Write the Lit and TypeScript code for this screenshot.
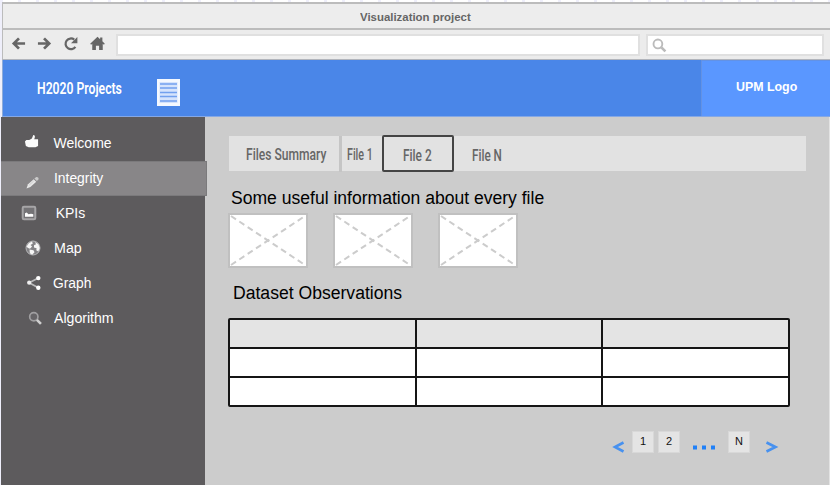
import { LitElement, html, svg, css } from "lit";
import { customElement, property, query, state } from "lit/decorators.js";

/** One line of text scaled horizontally to an exact width. */
@customElement("fit-text")
class FitText extends LitElement {
  @property() text = "";
  @property({ type: Number }) width = 0;
  @state() scale = 1;
  @query("span") span!: HTMLSpanElement;
  static styles = css`
    :host { display: block; height: 20px; white-space: nowrap; }
    span { display: inline-block; line-height: 20px; transform-origin: 0 50%; }
  `;
  firstUpdated() {
    this.scale = this.width / this.span.offsetWidth;
  }
  render() {
    return html`<div style="width:${this.width}px"><span style="transform:scaleX(${this.scale})">${this.text}</span></div>`;
  }
}

const icons = {
  back: svg`<path d="M15 8H3M8.500 2.500L3 8l5.500 5.500" fill="none" stroke="currentColor" stroke-width="2.900"/>`,
  forward: svg`<path d="M1 8h12M7.500 2.500L13 8l-5.500 5.500" fill="none" stroke="currentColor" stroke-width="2.900"/>`,
  reload: svg`<path d="M13.200 11.500A5.700 5.700 0 1 1 12 3.900" fill="none" stroke="currentColor" stroke-width="2.400"/><path d="M15.300 1v6.800H8.500z" fill="currentColor"/>`,
  home: svg`<path d="M8 .8L10.800 3.400V1.500h2.400v4.200L15.800 8.200l-1 1.100L13.600 8.300V14.800H9.700V10.300H6.300v4.500H2.400V8.300L1.200 9.300l-1-1.100z" fill="currentColor"/>`,
  search: svg`<circle cx="6.300" cy="6.300" r="4.700" fill="none" stroke="currentColor" stroke-width="2"/><path d="M10 10l4.300 4.300" stroke="currentColor" stroke-width="2.800"/>`,
  thumb: svg`<path d="M1 8L2.500 6.400H5.600L8.400 4.900 9.900 1c1.600.2 2 1.400 1.600 2.600L10.900 5.600H15V12.900L12.200 14H5L2 12.800z" fill="#fbfbfb"/>`,
  pencil: svg`<path d="M1.600 14.500l1.600-4.600 6-5.400 2.800 2.700-6.300 5.600z" fill="#e6e6e6"/><path d="M10 3.800l2-1.600c1.700-.2 2.500.8 2.500 2.200L12.700 6.500z" fill="#c9c9c9"/><path d="M4.500 10.800l4.700-4.300" stroke="#ccc"/>`,
  picture: svg`<rect x="1.700" y="1.700" width="12.600" height="12.600" rx="1.300" fill="#747376" stroke="#a6a5a7" stroke-width="2"/><path d="M4 11.800V8.200l1.700-.8 1.800 1.800L10 8.800l2.300.4v2.600z" fill="#fff"/>`,
  globe: svg`<circle cx="8" cy="8" r="7" fill="#848386" stroke="#b5b5b7"/><path d="M1.500 6.500L4 3l3-1.600.8 2L5.500 5l1.600 1.600L5 8.800 3 8zM4.500 9.500l4 .7 1 2-2.300 2.600-2.400-1.500zM10 2l3.400 2.200L14.800 8l-1.500 3.600-2-1.300.3-2L9 7.500 9 5.300l2-1z" fill="#f6f6f6"/>`,
  share: svg`<path d="M12.300 3.100L3.200 7.700l9.100 5.100" fill="none" stroke="#bcbcbd" stroke-width="1.700"/><circle cx="12.300" cy="3.100" r="2.200" fill="#fff"/><circle cx="3.200" cy="7.700" r="2.100" fill="#eee"/><circle cx="12.300" cy="12.800" r="2.200" fill="#fff"/>`,
  lens: svg`<circle cx="6.200" cy="6.200" r="4.400" fill="#666467" stroke="#a09fa1" stroke-width="1.800"/><path d="M9.500 9.500l4.300 4.300" stroke="#d0d0d0" stroke-width="2.800"/>`,
};

const menu = [
  { label: "Welcome", icon: icons.thumb, size: 15, ix: 24, iy: -2.5, tx: 53.5, w: 58 },
  { label: "Integrity", icon: icons.pencil, size: 15, ix: 25, iy: 3.5, tx: 54.3, w: 49.5, active: true },
  { label: "KPIs", icon: icons.picture, size: 16, ix: 21, iy: -0.5, tx: 55.7, w: 30 },
  { label: "Map", icon: icons.globe, size: 16, ix: 25, iy: -1, tx: 54.3, w: 27.5 },
  { label: "Graph", icon: icons.share, size: 16, ix: 25.5, iy: -1, tx: 53, w: 38.5 },
  { label: "Algorithm", icon: icons.lens, size: 15, ix: 28, iy: 0, tx: 53.5, w: 59.5 },
];

@customElement("app-root")
class AppRoot extends LitElement {
  static styles = css`
    :host {
      display: flex; flex-direction: column; box-sizing: border-box;
      width: 830px; height: 485px; overflow: hidden; padding: 2px 0 0 2px;
      font-family: "Liberation Sans", Arial, sans-serif;
      background: repeating-linear-gradient(90deg, #efeffb 0 3px, #fff 3px 18px);
    }
    * { box-sizing: border-box; }
    svg { display: block; overflow: visible; flex: none; }
    .title {
      height: 28px; flex: none; display: flex; justify-content: center; padding-top: 5px;
      background: #ededed; border: 2px solid #bcbcbc; border-right: 0; border-left-width: 1px;
      color: #666; font-size: 11px; font-weight: bold;
    }
    .title fit-text { margin: -2px 2px 0 0; }
    .tools {
      height: 30px; flex: none; display: flex; align-items: center; padding: 0 6px 0 8px;
      background: #ececec; border-left: 1px solid #bcbcbc; border-bottom: 1px solid #b2b5bc; color: #666;
    }
    .tools > svg { margin-right: 11px; position: relative; top: -1px; }
    .field { height: 22px; background: #fff; border: 2px solid #e0e0e0; }
    .url { width: 525px; margin-right: 6px; }
    .find { width: 178px; padding: 2px 0 0 4px; color: #bbb; }
    .banner {
      height: 57px; flex: none; display: flex; background: #4a86e8; color: #fff;
      border-left: 1px solid #8dabd9; border-bottom: 1px solid #85a8e5;
    }
    .brand { width: 698px; display: flex; padding-left: 34px; font-size: 16.5px; }
    .cond { font-family: Roboto, "Liberation Sans", sans-serif; font-weight: 500; }
    .brand.cond { font-weight: 600; }
    .brand fit-text { margin-top: 19px; }
    .brand svg { margin: 19px 0 0 35px; }
    .logo {
      flex: 1; background: #5a97ff; border: 1px solid #6392e4; border-right: 0; border-bottom: 0;
      padding: 16px 0 0 34px; font-size: 13px; font-weight: bold;
    }
    .body { flex: 1; display: flex; margin-left: -1px; min-height: 0; }
    .side { width: 204px; flex: none; background: #5d5b5d; padding-top: 9px; color: #fff; font-size: 14px; }
    .item { height: 35px; display: grid; grid-template-columns: 52px 1fr; align-items: center; }
    .item fit-text { margin-top: -1px; }
    .active { width: 206px; position: relative; background: #888688; border: 1px solid #7b7a7c; border-left: 0; }
    .main { flex: 1; background: #ccc; border-right: 1px solid #e3e3e3; padding: 18px 0 0 23px; }
    .tabs { display: flex; width: 578px; height: 36px; color: #666; font-size: 16px;
      background: linear-gradient(#e2e2e2, #e2e2e2) 1px 1px / 577px 35px no-repeat; }
    .tabs .tab { padding-top: 10px; }
    .summary { width: 114px; border-right: 3px solid #c5c5c5; padding-left: 17.5px; margin-top: 1px; height: 36px; }
    .tabs .summary { padding-top: 9px; }
    .one { width: 40px; padding-left: 5px; }
    .two { width: 72px; height: 37px; border: 2px solid #444; border-radius: 2px; padding-left: 19px; }
    .tabs .two { padding-top: 9px; }
    .tabs .last { padding: 11px 0 0 18px; }
    .heading { color: #000; font-size: 18px; }
    .info { margin: 17px 0 0 3px; }
    .cards { display: flex; gap: 25px; margin-top: 5px; }
    .card { width: 80px; height: 55px; background: #fff; border: 2px solid #c0c0c0; }
    .data { margin: 15px 0 0 5px; }
    .table {
      display: grid; grid-template-columns: repeat(3, 1fr); grid-template-rows: repeat(3, 27px); gap: 2px;
      width: 562px; margin-top: 15px; padding: 2px; background: #151515; border-radius: 2px;
    }
    .cell { background: #fff; }
    .th { background: #e4e4e4; }
    .pager { display: flex; align-items: flex-start; margin: 24px 0 0 385px; color: #1f80f8; }
    .page { width: 22px; height: 22px; background: #e4e4e4; border: 1px solid #d8d8d8;
      color: #111; font-size: 11px; line-height: 19px; text-align: center; }
    .second { margin-left: 4px; }
    .arrow { margin-top: 10px; }
    .next { margin-left: 16px; }
    .dots { margin: 14px 13px 0; }
  `;

  icon(content: unknown, size = 16, x = 0, y = 0) {
    return html`<svg width=${size} height=${size} viewBox="0 0 16 16" style="margin-left:${x}px;margin-top:${y * 2}px">${content}</svg>`;
  }

  render() {
    return html`
      <div class="title"><fit-text text="Visualization project" width="111"></fit-text></div>
      <div class="tools">
        ${this.icon(icons.back, 15)}${this.icon(icons.forward, 15)}${this.icon(icons.reload, 15)}${this.icon(icons.home, 15, 1)}
        <div class="field url"></div>
        <div class="field find">${this.icon(icons.search, 15)}</div>
      </div>
      <div class="banner">
        <div class="brand cond">
          <fit-text text="H2020 Projects" width="85"></fit-text>
          <svg width="23" height="27">
            <rect width="23" height="27" fill="#f4f8ff"/>
            <rect x="2.500" y="3" width="18" height="21" fill="#d5e3fc"/>
            <path d="M3 5h17M3 9h17M3 13.500h17M3 17.500h17M3 22h17" stroke="#72a0ee" stroke-width="1.500"/>
          </svg>
        </div>
        <div class="logo"><fit-text text="UPM Logo" width="61"></fit-text></div>
      </div>
      <div class="body">
        <div class="side">
          ${menu.map((m) => html`<div class="item ${m.active ? "active" : ""}">
            ${this.icon(m.icon, m.size, m.ix - 1, m.iy)}
            <fit-text style="margin-left:${m.tx - 53}px" text=${m.label} width=${m.w}></fit-text>
          </div>`)}
        </div>
        <div class="main">
          <div class="tabs cond">
            <div class="tab summary"><fit-text text="Files Summary" width="80"></fit-text></div>
            <div class="tab one"><fit-text text="File 1" width="26"></fit-text></div>
            <div class="tab two"><fit-text text="File 2" width="29"></fit-text></div>
            <div class="tab last"><fit-text text="File N" width="30"></fit-text></div>
          </div>
          <div class="heading info"><fit-text text="Some useful information about every file" width="313"></fit-text></div>
          <div class="cards">
            ${[0, 1, 2].map(() => html`<div class="card"><svg width="76" height="51">
              <path d="M1 1l74 49M1 50L75 1" stroke="#ccc" stroke-width="2" stroke-dasharray="6 4"/>
            </svg></div>`)}
          </div>
          <div class="heading data"><fit-text text="Dataset Observations" width="169"></fit-text></div>
          <div class="table">
            ${Array.from({ length: 9 }, (_, i) => html`<div class="cell ${i < 3 ? "th" : ""}"></div>`)}
          </div>
          <div class="pager">
            <svg class="arrow" width="19" height="13"><path d="M10.500 1.500L2 6l8.500 4.500" fill="none" stroke="#4791ef" stroke-width="2.600"/></svg>
            <div class="page">1</div>
            <div class="page second">2</div>
            <svg class="dots" width="22" height="5"><path d="M0 .5h4v4H0zM9 .5h4v4H9zM18 .5h4v4h-4z" fill="currentColor"/></svg>
            <div class="page">N</div>
            <svg class="arrow next" width="13" height="13"><path d="M.5 1.500L9.500 6 .5 10.500" fill="none" stroke="#4791ef" stroke-width="2.600"/></svg>
          </div>
        </div>
      </div>`;
  }
}
